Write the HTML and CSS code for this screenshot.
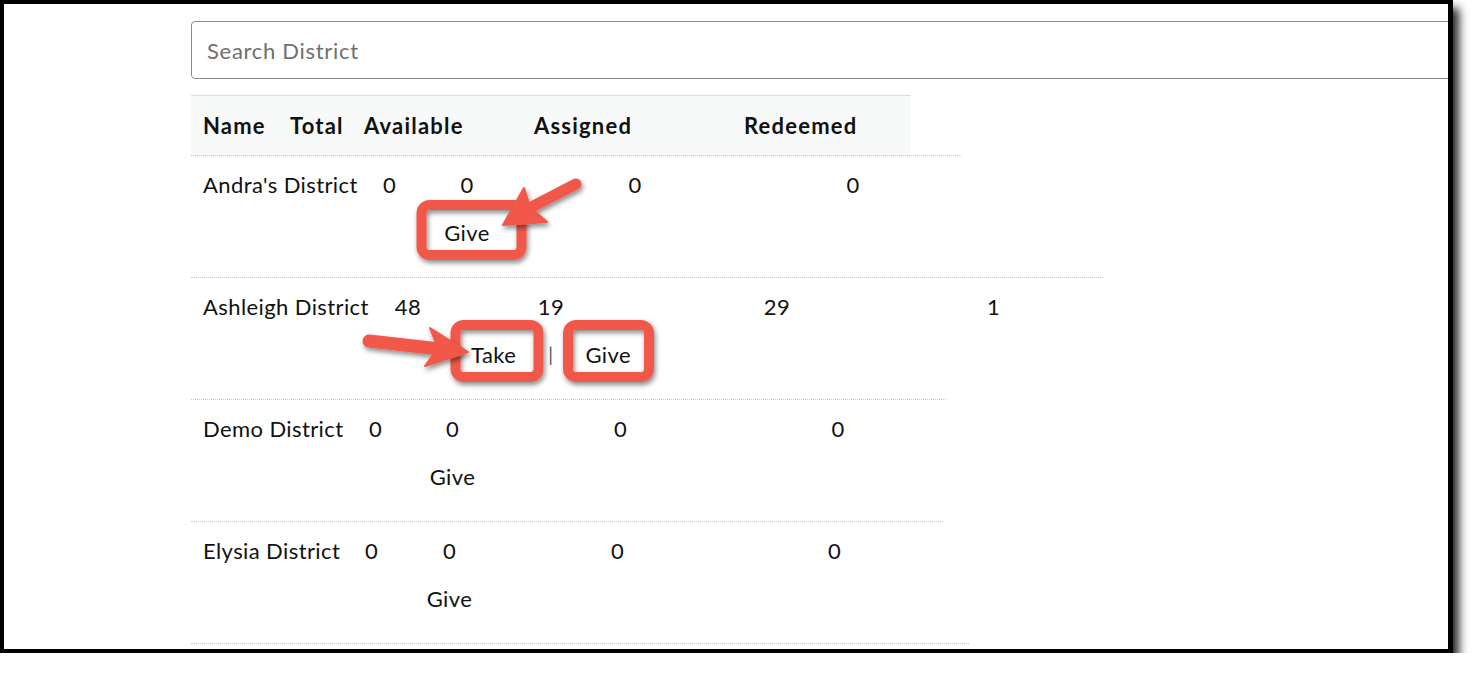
FILE: index.html
```html
<!DOCTYPE html>
<html lang="en">
<head>
<meta charset="utf-8">
<title>Districts</title>
<link rel="stylesheet" href="styles.css">
</head>
<body>
<div class="frame">
  <div class="content">
    <input class="search" type="text" placeholder="Search District">
    <div class="table">
      <div class="thead">
        <div class="th">Name</div>
        <div class="th">Total</div>
        <div class="th">Available</div>
        <div class="th">Assigned</div>
        <div class="th">Redeemed</div>
      </div>
      <div class="row row-andra">
        <div class="cell name">Andra's District</div>
        <div class="cell">0</div>
        <div class="cell avail"><span>0</span><span class="actions"><span class="link">Give</span></span></div>
        <div class="cell">0</div>
        <div class="cell">0</div>
      </div>
      <div class="row row-ashleigh">
        <div class="cell name">Ashleigh District</div>
        <div class="cell">48</div>
        <div class="cell avail"><span>19</span><span class="actions"><span class="link">Take</span><span class="sep">|</span><span class="link">Give</span></span></div>
        <div class="cell">29</div>
        <div class="cell">1</div>
      </div>
      <div class="row row-demo">
        <div class="cell name">Demo District</div>
        <div class="cell">0</div>
        <div class="cell avail"><span>0</span><span class="actions"><span class="link">Give</span></span></div>
        <div class="cell">0</div>
        <div class="cell">0</div>
      </div>
      <div class="row row-elysia">
        <div class="cell name">Elysia District</div>
        <div class="cell">0</div>
        <div class="cell avail"><span>0</span><span class="actions"><span class="link">Give</span></span></div>
        <div class="cell">0</div>
        <div class="cell">0</div>
      </div>
      <div class="row row-next"></div>
    </div>
  </div>
  <svg class="marks" width="1453" height="653" viewBox="0 0 1453 653" xmlns="http://www.w3.org/2000/svg">
    <defs>
      <filter id="sh" x="-20%" y="-20%" width="140%" height="140%">
        <feDropShadow dx="1.5" dy="3" stdDeviation="2.5" flood-color="#000" flood-opacity="0.45"/>
      </filter>
    </defs>
    <g filter="url(#sh)" fill="none" stroke="#f2584a">
      <rect x="421.5" y="205" width="100" height="50" rx="8" stroke-width="10"/>
      <rect x="455.5" y="325" width="83" height="52" rx="8" stroke-width="10"/>
      <rect x="568" y="325" width="81" height="52" rx="8" stroke-width="10"/>
    </g>
    <g filter="url(#sh)" fill="#f2584a" stroke="#f2584a" stroke-linejoin="round">
      <line x1="576" y1="184" x2="522" y2="212" stroke-width="11" stroke-linecap="round"/>
      <polygon points="503,225 524,188 530,207 547,222" stroke-width="2"/>
      <line x1="369" y1="341" x2="440" y2="349" stroke-width="13" stroke-linecap="round"/>
      <polygon points="468,352 430,328 438,348 425,366" stroke-width="2"/>
    </g>
  </svg>
</div>
</body>
</html>
```
FILE: styles.css
```css
* { box-sizing: border-box; }
html, body { margin: 0; padding: 0; background: #fff; }
body {
  font-family: Lato, "Liberation Sans", sans-serif;
  font-size: 22px;
  letter-spacing: 0.4px;
  color: #111;
}
.frame {
  position: relative;
  width: 1453px;
  height: 653px;
  border-style: solid;
  border-color: #000;
  border-width: 4px 5px 4px 4px;
  background: #fff;
  box-shadow: 6px 8px 9px rgba(0, 0, 0, 0.85);
  overflow: hidden;
}
.content {
  padding: 17px 0 0 187px;
}
.search {
  display: block;
  width: 1400px;
  height: 58px;
  border: 1px solid #8c8c8c;
  border-radius: 4px;
  padding: 0 15px;
  font-family: Lato, "Liberation Sans", sans-serif;
  font-size: 22px;
  letter-spacing: 0.7px;
  color: #111;
  outline: none;
}
.search::placeholder { color: #6f6f6f; }
.table { margin-top: 16px; }
.thead {
  display: grid;
  grid-template-columns: 87px 74px 170px 210px 179px;
  width: 720px;
  height: 60px;
  align-items: center;
  border-top: 1px solid #dedede;
  background: #f8f9f9;
}
.th {
  padding-left: 12px;
  font-weight: 700;
  letter-spacing: 1.2px;
  line-height: 24px;
  white-space: nowrap;
}
.row {
  display: grid;
  align-items: start;
  height: 122px;
  border-top: 1px dotted #c4c4c4;
  padding-top: 17px;
  line-height: 24px;
}
.cell { text-align: center; white-space: nowrap; }
.cell.name { text-align: left; padding-left: 12px; }
.avail {
  display: flex;
  flex-direction: column;
  align-items: center;
  gap: 24px;
}
.actions { display: flex; align-items: center; gap: 20px; }
.link { padding: 0 12px; color: #111; }
.actions .link:only-child { padding: 0; }
.sep { color: #555; font-size: 19px; }
.row-andra { width: 771px; grid-template-columns: 180px 37px 118px 218px 218px; }
.row-ashleigh { width: 912px; grid-template-columns: 193px 48px 238px 214px 219px; }
.row-demo { width: 755px; grid-template-columns: 166px 37px 117px 219px 216px; }
.row-elysia { width: 752px; grid-template-columns: 162px 37px 119px 217px 217px; }
.row-next { width: 778px; }
.marks {
  position: absolute;
  left: -4px;
  top: -4px;
  pointer-events: none;
}
```
